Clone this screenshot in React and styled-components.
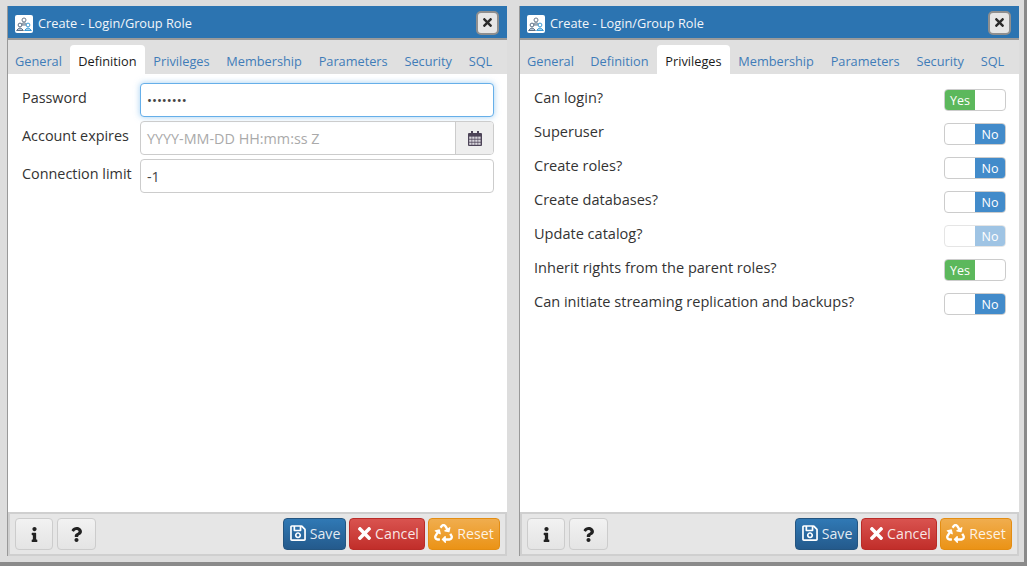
import React from "react";
import styled, { createGlobalStyle } from "styled-components";
import { FaRegSave, FaTimes, FaRecycle, FaInfo, FaQuestion } from "react-icons/fa";

const Global = createGlobalStyle`
  html, body { margin: 0; padding: 0; background: #fff; }
  body { font-family: "Open Sans", "Liberation Sans", sans-serif; color: #333; overflow: hidden; }
  * { box-sizing: border-box; }
`;

const Page = styled.div`
  width: 1030px;
  height: 568px;
  background: #fff;
`;

const Backdrop = styled.div`
  width: 1027px;
  height: 566px;
  background: #ddd;
  border-right: 3px solid #8a8a8a;
  border-bottom: 4px solid #8a8a8a;
  padding: 6px 0 0 7px;
  display: flex;
  gap: 12px;
  align-items: flex-start;
`;

const Dialog = styled.section`
  width: 500px;
  height: 550px;
  border-left: 1px solid #999;
  background: #fff;
  display: flex;
  flex-direction: column;
`;

const TitleBar = styled.header`
  height: 34px;
  flex: none;
  background: #2c74b1;
  border-bottom: 2px solid #9a9a9a;
  display: flex;
  align-items: center;
  padding: 0 8px 0 7px;
  color: #f2f6fa;
  font-size: 12.75px;
`;

const LogoBox = styled.span`
  width: 18px;
  height: 18px;
  margin: 4px 5px 0 0;
  background: #fff;
  border-radius: 2px;
  display: flex;
  align-items: center;
  justify-content: center;
`;

const Title = styled.span`
  flex: 1;
  position: relative;
  top: 1px;
`;

const CloseButton = styled.button`
  width: 23px;
  height: 24px;
  margin-top: 1px;
  padding: 0;
  background: #e6e6e6;
  border: 2px solid #8f8f8f;
  border-radius: 5px;
  color: #2b2b2b;
  font-size: 13px;
  display: flex;
  align-items: center;
  justify-content: center;
`;

const TabBar = styled.nav`
  height: 34px;
  flex: none;
  background: #e0e0e0;
  display: flex;
  align-items: flex-end;
  font-size: 12.75px;
`;

const Tab = styled.span`
  height: 29px;
  padding: 7px 8.4px 0;
  color: ${(p) => (p.$active ? "#1a1a1a" : "#3f7cb8")};
  background: ${(p) => (p.$active ? "#fff" : "transparent")};
  border-radius: 4px 4px 0 0;
  white-space: nowrap;
  &:first-child { padding-left: 7px; padding-right: 8px; }
`;

const Body = styled.main`
  flex: 1;
  display: flex;
  flex-direction: column;
  background: #fff;
`;

const Form = styled.div`
  padding: 9px 13px 0 14px;
  display: flex;
  flex-direction: column;
  gap: 4px;
`;

const FieldRow = styled.div`
  display: flex;
  align-items: flex-start;
  height: 34px;
`;

const FieldLabel = styled.label`
  width: 118px;
  flex: none;
  font-size: 14.4px;
  line-height: 30px;
  white-space: nowrap;
  color: #333;
`;

const Input = styled.div`
  flex: 1;
  height: 34px;
  padding: 0 6px;
  display: flex;
  align-items: center;
  font-size: ${(p) => (p.$secret ? "13.2px" : "14.3px")};
  color: #444;
  background: #fff;
  border: 1px solid ${(p) => (p.$focus ? "#66afe9" : "#ccc")};
  border-radius: 4px;
  box-shadow: ${(p) => (p.$focus ? "0 0 6px rgba(102,175,233,.6)" : "none")};
`;

const Group = styled.div`
  flex: 1;
  height: 34px;
  display: flex;
  border: 1px solid #ccc;
  border-radius: 4px;
  overflow: hidden;
`;

const GroupText = styled.div`
  flex: 1;
  padding: 0 6px;
  display: flex;
  align-items: center;
  font-size: 14.35px;
  color: #aaa;
`;

const Addon = styled.div`
  width: 38px;
  background: #eee;
  border-left: 1px solid #ccc;
  display: flex;
  align-items: center;
  justify-content: center;
`;

const SwitchList = styled.div`
  padding: 15px 13px 0 14px;
  display: flex;
  flex-direction: column;
  gap: 12px;
`;

const SwitchRow = styled.div`
  height: 22px;
  display: flex;
  align-items: center;
  justify-content: space-between;
`;

const SwitchLabel = styled.span`
  font-size: 14.55px;
  color: #333;
  position: relative;
  top: -3px;
`;

const Switch = styled.div`
  width: 62px;
  height: 22px;
  display: flex;
  justify-content: ${(p) => (p.$on ? "flex-start" : "flex-end")};
  background: #fff;
  border: 1px solid #ccc;
  border-radius: 4px;
  overflow: hidden;
  opacity: ${(p) => (p.$disabled ? 0.5 : 1)};
`;

const Knob = styled.span`
  width: 30px;
  background: ${(p) => (p.$on ? "#5cb85c" : "#428bca")};
  color: #fff;
  font-size: 12.5px;
  display: flex;
  align-items: center;
  justify-content: center;
`;

const Footer = styled.footer`
  height: 44px;
  flex: none;
  background: #e6e6e6;
  border: 2px solid #cfcfcf;
  padding: 4px 5px 0;
  display: flex;
  align-items: flex-start;
  gap: 3px;
`;

const Spacer = styled.span`
  flex: 1;
`;

const IconButton = styled.button`
  width: ${(p) => p.$w}px;
  height: 32px;
  margin-right: 1px;
  padding: 0;
  background: linear-gradient(#f2f2f2, #e4e4e4);
  border: 1px solid #ccc;
  border-radius: 4px;
  color: #222;
  font-size: 15px;
  display: flex;
  align-items: center;
  justify-content: center;
`;

const ActionButton = styled.button`
  width: ${(p) => p.$w}px;
  height: 32px;
  padding: 0 0 2px;
  border: 1px solid ${(p) => p.$edge};
  border-radius: 4px;
  background: linear-gradient(${(p) => p.$from}, ${(p) => p.$to});
  color: rgba(255, 255, 255, 0.88);
  font-family: inherit;
  font-size: 14.2px;
  display: flex;
  align-items: center;
  justify-content: center;
  gap: ${(p) => p.$gap}px;
  svg { font-size: ${(p) => p.$icon}px; color: #fff; flex: none; }
`;

const LogoIcon = () => (
  <svg width="16" height="15" viewBox="0 0 16 15" fill="none" strokeWidth="1">
    <circle cx="8" cy="3" r="2" stroke="#6b7a8c" />
    <path d="M4.5 8 Q8 3.5 11.5 8 Z" stroke="#6b7a8c" fill="#c9d3dd" />
    <circle cx="4" cy="8" r="1.9" stroke="#5c6f86" fill="#fff" />
    <path d="M.6 13.5 Q4 8.5 7.4 13.5 Z" stroke="#5c6f86" fill="#b7c6d6" />
    <circle cx="12" cy="8" r="1.9" stroke="#3f9bd4" fill="#fff" />
    <path d="M8.6 13.5 Q12 8.5 15.4 13.5 Z" stroke="#3f9bd4" fill="#9fd2ef" />
  </svg>
);

const CalendarIcon = () => (
  <svg width="14" height="15" viewBox="0 0 14 15">
    <rect x="0" y="2" width="14" height="13" rx="1" fill="#4d4458" />
    <rect x="3" y="0" width="2" height="4" fill="#4d4458" />
    <rect x="9" y="0" width="2" height="4" fill="#4d4458" />
    <g fill="#d9d6dd">
      {[1.2, 4.2, 7.2, 10.2].map((x) =>
        [5.6, 8.6, 11.6].map((y) => <rect key={`${x}-${y}`} x={x} y={y} width="2.4" height="2.2" />)
      )}
    </g>
  </svg>
);

const TABS = ["General", "Definition", "Privileges", "Membership", "Parameters", "Security", "SQL"];

const SWITCHES = [
  ["Can login?", true],
  ["Superuser", false],
  ["Create roles?", false],
  ["Create databases?", false],
  ["Update catalog?", false, true],
  ["Inherit rights from the parent roles?", true],
  ["Can initiate streaming replication and backups?", false],
];

const RoleDialog = ({ active, children }) => (
  <Dialog>
    <TitleBar>
      <LogoBox><LogoIcon /></LogoBox>
      <Title>Create - Login/Group Role</Title>
      <CloseButton><FaTimes /></CloseButton>
    </TitleBar>
    <TabBar>
      {TABS.map((t) => (
        <Tab key={t} $active={t === active}>{t}</Tab>
      ))}
    </TabBar>
    <Body>{children}</Body>
    <Footer>
      <IconButton $w={38}><FaInfo /></IconButton>
      <IconButton $w={39}><FaQuestion /></IconButton>
      <Spacer />
      <ActionButton $w={63} $icon={18} $gap={3} $from="#3079b5" $to="#245a8c" $edge="#245580"><FaRegSave />Save</ActionButton>
      <ActionButton $w={76} $icon={19} $gap={1} $from="#d9534f" $to="#c12e2a" $edge="#b92c28"><FaTimes />Cancel</ActionButton>
      <ActionButton $w={72} $icon={19} $gap={4} $from="#f0ad4e" $to="#eb9316" $edge="#e38d13"><FaRecycle />Reset</ActionButton>
    </Footer>
  </Dialog>
);

export default function App() {
  return (
    <Page>
      <Global />
      <Backdrop>
        <RoleDialog active="Definition">
          <Form>
            <FieldRow>
              <FieldLabel>Password</FieldLabel>
              <Input $focus $secret>••••••••</Input>
            </FieldRow>
            <FieldRow>
              <FieldLabel>Account expires</FieldLabel>
              <Group>
                <GroupText>YYYY-MM-DD HH:mm:ss Z</GroupText>
                <Addon><CalendarIcon /></Addon>
              </Group>
            </FieldRow>
            <FieldRow>
              <FieldLabel>Connection limit</FieldLabel>
              <Input>-1</Input>
            </FieldRow>
          </Form>
        </RoleDialog>
        <RoleDialog active="Privileges">
          <SwitchList>
            {SWITCHES.map(([label, on, disabled]) => (
              <SwitchRow key={label}>
                <SwitchLabel>{label}</SwitchLabel>
                <Switch $on={on} $disabled={disabled}>
                  <Knob $on={on}>{on ? "Yes" : "No"}</Knob>
                </Switch>
              </SwitchRow>
            ))}
          </SwitchList>
        </RoleDialog>
      </Backdrop>
    </Page>
  );
}
